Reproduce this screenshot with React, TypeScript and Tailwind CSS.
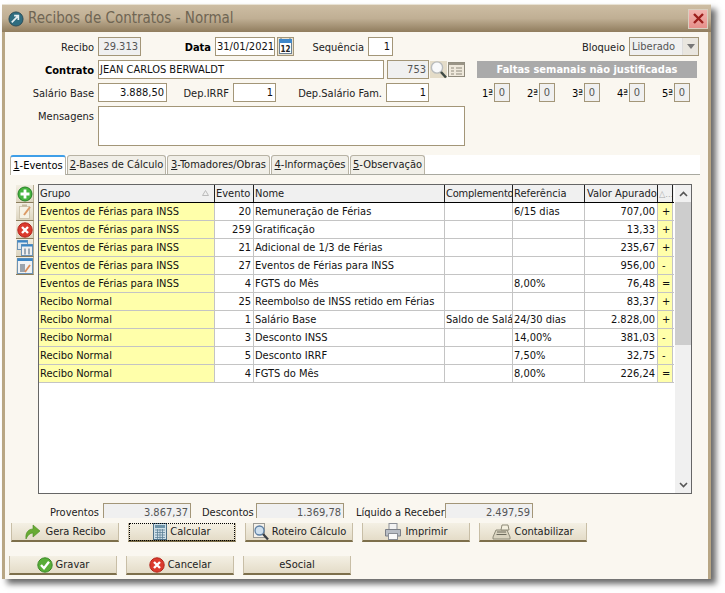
import React from "react";

const rows: string[][] = [
  ["Eventos de Férias para INSS","20","Remuneração de Férias","","6/15 dias","707,00","+"],
  ["Eventos de Férias para INSS","259","Gratificação","","","13,33","+"],
  ["Eventos de Férias para INSS","21","Adicional de 1/3 de Férias","","","235,67","+"],
  ["Eventos de Férias para INSS","27","Eventos de Férias para INSS","","","956,00","-"],
  ["Eventos de Férias para INSS","4","FGTS do Mês","","8,00%","76,48","="],
  ["Recibo Normal","25","Reembolso de INSS retido em Férias","","","83,37","+"],
  ["Recibo Normal","1","Salário Base","Saldo de Salário","24/30 dias","2.828,00","+"],
  ["Recibo Normal","3","Desconto INSS","","14,00%","381,03","-"],
  ["Recibo Normal","5","Desconto IRRF","","7,50%","32,75","-"],
  ["Recibo Normal","4","FGTS do Mês","","8,00%","226,24","="],
];

const colW = ["w-[176px]","w-[39px]","w-[191px]","w-[68px]","w-[72px]","w-[73px]","w-[15px]"];

function Field({ w, children, gray, right, className = "" }: { w: string; children?: React.ReactNode; gray?: boolean; right?: boolean; className?: string }) {
  return (
    <div className={`${w} h-[19px] shrink-0 border border-[#a39678] ${gray ? "bg-[#f0f0f0] text-[#555]" : "bg-white text-[#111]"} ${right ? "text-right pr-[2px]" : "pl-[1px]"} leading-[15px] pt-[1px] overflow-hidden ${className}`}>
      {children}
    </div>
  );
}

function Lbl({ w, bold, children }: { w: string; bold?: boolean; children: React.ReactNode }) {
  return <div className={`${w} shrink-0 text-right pr-[4px] pt-[3px] whitespace-nowrap text-[#222] ${bold ? "font-bold text-black" : ""}`}>{children}</div>;
}

function Box({ children }: { children: React.ReactNode }) {
  return <div className="w-[18px] h-[18px] flex items-center justify-center bg-gradient-to-b from-[#f2eee2] to-[#ddd5c0] border-b border-b-[#8a7c5c] border-r border-r-[#b8ad92]">{children}</div>;
}
function Plus() {
  return <Box><svg width="16" height="16" viewBox="0 0 16 16"><circle cx="8" cy="8" r="7" fill="#45b43f" stroke="#257f25"/><path d="M8 3.500v9M3.500 8h9" stroke="#fff" strokeWidth="2.800"/></svg></Box>;
}
function EditDoc() {
  return <Box><svg width="16" height="16" viewBox="0 0 16 16"><rect x="2.500" y="2.500" width="10" height="12" fill="#f6f2e6" stroke="#cfc6b0"/><path d="M5 1.500h5" stroke="#c4b99f" strokeWidth="2"/><path d="M7 11l6-8" stroke="#dc9a66" strokeWidth="2"/></svg></Box>;
}
function XCircle({ size = 16 }: { size?: number }) {
  return <svg width={size} height={size} viewBox="0 0 16 16"><circle cx="8" cy="8" r="7.200" fill="#db3b2e" stroke="#b3251c"/><path d="M5 5l6 6M11 5l-6 6" stroke="#fff" strokeWidth="2.400"/></svg>;
}
function WinDup() {
  return <Box><svg width="16" height="16" viewBox="0 0 16 16"><rect x="0.500" y="0.500" width="10" height="9" fill="#dfe7ee" stroke="#6d93b5"/><rect x="0.500" y="0.500" width="10" height="2" fill="#3b86c6"/><rect x="4.500" y="4.500" width="11" height="11" fill="#f0f0f0" stroke="#6d93b5"/><rect x="4.500" y="4.500" width="11" height="2" fill="#3b86c6"/><path d="M8 8.500v6M12 8.500v6" stroke="#9aa8b5" strokeWidth="2"/></svg></Box>;
}
function WinEdit() {
  return <Box><svg width="16" height="16" viewBox="0 0 16 16"><rect x="0.500" y="0.500" width="15" height="15" fill="#f0f2f4" stroke="#6d93b5"/><rect x="0.500" y="0.500" width="15" height="2.500" fill="#3b86c6"/><rect x="3" y="6" width="5" height="8" fill="#9aa3ad"/><path d="M8 14l5-7" stroke="#d98d5a" strokeWidth="1.800"/></svg></Box>;
}
function Calendar() {
  return <svg width="17" height="19" viewBox="0 0 17 19"><rect x="0.500" y="0.500" width="16" height="18" fill="#e9e2d0" stroke="#a39678"/><rect x="2.500" y="2.500" width="12" height="14" fill="#fff" stroke="#6a7f93"/><rect x="2" y="2" width="13" height="4" fill="#3f87c9"/><path d="M4 2v-1M13 2v-1" stroke="#6a7f93"/><text x="8.500" y="15" textAnchor="middle" fontSize="8" fontWeight="700" fontFamily="'DejaVu Sans',sans-serif" fill="#222">12</text></svg>;
}
function Magnifier() {
  return <svg width="17" height="19" viewBox="0 0 17 19"><rect x="0" y="1" width="17" height="17" fill="#e4dcc8"/><circle cx="7" cy="7.500" r="5.600" fill="#f8f9fa" stroke="#b9bcbd" strokeWidth="1.400"/><path d="M11 12l5 5.500" stroke="#3f4a44" strokeWidth="2.600"/></svg>;
}
function Card() {
  return <svg width="17" height="19" viewBox="0 0 17 19"><rect x="0.500" y="2.500" width="16" height="14" fill="#efe9dc" stroke="#8f8a7c"/><rect x="0.500" y="2.500" width="16" height="2.500" fill="#9a9587"/><path d="M3 8h3M3 11h3M3 14h3M8 8h6M8 11h6M8 14h6" stroke="#8f8a7c"/></svg>;
}
function Arrow() {
  return <svg width="18" height="18" viewBox="0 0 18 18"><path d="M2 16C1 9 5 6 9 6V2l7 6-7 6v-4c-3 0-5 2-7 6z" fill="#68ab33" stroke="#4c8a25" strokeWidth="0.600"/></svg>;
}
function Abacus() {
  return <svg width="14" height="17" viewBox="0 0 14 17"><rect x="0.500" y="0.500" width="13" height="16" fill="#cfe0e8" stroke="#4e7188"/><rect x="2" y="2" width="10" height="3" fill="#6d93a8"/><path d="M2 7h10M2 9.500h10M2 12h10M2 14.500h10M4.500 6v10M7 6v10M9.500 6v10" stroke="#5f8398" strokeWidth="0.800"/></svg>;
}
function Roteiro() {
  return <svg width="17" height="18" viewBox="0 0 17 18"><rect x="1.500" y="0.500" width="11" height="14" fill="#f4f1ea" stroke="#9b9a94"/><circle cx="7.500" cy="7.500" r="4.500" fill="#cfe0ee" stroke="#5c7fa3" strokeWidth="1.300"/><path d="M11 11l5 5.500" stroke="#3a3f45" strokeWidth="2.300"/></svg>;
}
function Printer() {
  return <svg width="18" height="17" viewBox="0 0 18 17"><rect x="5" y="0.500" width="8" height="6" fill="#f2f2f2" stroke="#8b8f96"/><path d="M1.500 6.500h15v6.500h-15z" fill="#b8bdc5" stroke="#7b7f87"/><rect x="4.500" y="10.500" width="9" height="6" fill="#fafafa" stroke="#8b8f96"/></svg>;
}
function Register() {
  return <svg width="19" height="17" viewBox="0 0 19 17"><path d="M1 14l3-7h11l3 7v2H1z" fill="#d9d3bf" stroke="#8d8a78"/><path d="M9 7l1-5h6l1 5z" fill="#f4f0df" stroke="#8d8a78"/><path d="M5 9h9M4.500 11.500h10" stroke="#6c6a5c"/></svg>;
}
function Check() {
  return <svg width="16" height="16" viewBox="0 0 16 16"><circle cx="8" cy="8" r="7.200" fill="#58ad38" stroke="#3b8a28"/><path d="M4 8l3 3.200L12 4.800" fill="none" stroke="#fff" strokeWidth="2.400"/></svg>;
}

function Btn({ w, icon, children, focus }: { w: string; icon?: React.ReactNode; children: React.ReactNode; focus?: boolean }) {
  return (
    <div className={`${w} h-[19px] shrink-0 relative flex items-center justify-center gap-[3px] bg-gradient-to-b from-[#f4f0e4] to-[#e4dcc8] border-b-2 border-b-[#7d6f4b] border-x border-x-[#c8bea6] text-[#222] whitespace-nowrap`}>
      {icon}
      <span>{children}</span>
      {focus && <span className="absolute inset-0 -bottom-[1px] border border-dotted border-black" />}
    </div>
  );
}

function SmallLbl({ w, children }: { w: string; children: React.ReactNode }) {
  return <div className={`${w} shrink-0 text-[#222] whitespace-nowrap`}>{children}</div>;
}

export default function App() {
  return (
    <div className="w-[725px] h-[593px] bg-white pt-[4px] pl-[2px] overflow-hidden font-['DejaVu_Sans'] font-stretch-condensed text-[11px] leading-[15px]">
      <div className="w-[709px] h-[575px] flex flex-col shadow-[5px_5px_6px_#6b6b6b] border-t border-t-[#e8e2d4]">
        <div className="h-[27px] shrink-0 flex items-center pl-[6px] pr-[3px] bg-gradient-to-b from-[#cdbda3] via-[#c0af94] to-[#907d5e]">
          <svg width="16" height="16" viewBox="0 0 17 17" className="mr-[4px]"><circle cx="8.500" cy="8.500" r="7.500" fill="#2f6d80" stroke="#294a55"/><path d="M4 12l6-6M6.500 5H11v4.500" fill="none" stroke="#e6eef0" strokeWidth="1.800"/></svg>
          <span className="text-[15px] text-[#6f6553] flex-1">Recibos de Contratos - Normal</span>
          <div className="w-[20px] h-[20px] flex items-center justify-center bg-gradient-to-b from-[#f2b5b0] to-[#e58f8a] border border-[#d8cfc0]">
            <svg width="11" height="11" viewBox="0 0 11 11"><path d="M1 1l9 9M10 1l-9 9" stroke="#9c1f1c" strokeWidth="2.400"/></svg>
          </div>
        </div>
        <div className="flex-1 flex flex-col bg-[#faf7f0] border-x-[3px] border-x-[#b8a684] pt-[5px] relative">
          <div className="flex items-start h-[19px]">
            <Lbl w="w-[93px]">Recibo</Lbl>
            <Field w="w-[43px]" gray right>29.313</Field>
            <Lbl w="w-[74px]" bold>Data</Lbl>
            <Field w="w-[60px]">31/01/2021</Field>
            <div className="w-[17px] ml-[2px] shrink-0"><Calendar /></div>
            <Lbl w="w-[74px]">Sequência</Lbl>
            <Field w="w-[25px]" right>1</Field>
            <Lbl w="w-[236px]">Bloqueio</Lbl>
            <div className="w-[70px] h-[19px] shrink-0 border border-[#a39678] bg-[#f0f0f0] text-[#555] pl-[2px] pt-[1px] flex justify-between">
              <span>Liberado</span>
              <div className="w-[16px] h-[17px] -mt-[1px] flex items-center justify-center bg-[#e9e6df] border-l border-l-[#ddd]">
                <svg width="8" height="5" viewBox="0 0 8 5"><path d="M0 0h8L4 5z" fill="#777" /></svg>
              </div>
            </div>
          </div>
          <div className="flex items-start h-[19px] mt-[4px]">
            <Lbl w="w-[93px]" bold>Contrato</Lbl>
            <Field w="w-[286px]" className="text-[#111]">JEAN CARLOS BERWALDT</Field>
            <Field w="w-[42px] ml-[3px]" gray right>753</Field>
            <div className="w-[17px] ml-[1px] shrink-0"><Magnifier /></div>
            <div className="w-[17px] ml-[1px] shrink-0"><Card /></div>
            <div className="w-[220px] h-[17px] ml-[12px] mt-[1px] shrink-0 bg-[#aaaaaa] text-white font-bold text-center text-[11px] leading-[17px]">Faltas semanais não justificadas</div>
          </div>
          <div className="flex items-start h-[19px] mt-[4px]">
            <Lbl w="w-[93px]">Salário Base</Lbl>
            <Field w="w-[69px]" right>3.888,50</Field>
            <Lbl w="w-[66px]">Dep.IRRF</Lbl>
            <Field w="w-[43px]" right>1</Field>
            <Lbl w="w-[110px]">Dep.Salário Fam.</Lbl>
            <Field w="w-[43px]" right>1</Field>
            <div className="w-[65px] shrink-0 text-right pr-[1px] pt-[3px]">1ª</div>
            <Field w="w-[16px]" gray className="text-center !pl-0 !pr-0">0</Field>
            <div className="w-[29px] shrink-0 text-right pr-[1px] pt-[3px]">2ª</div>
            <Field w="w-[16px]" gray className="text-center !pl-0 !pr-0">0</Field>
            <div className="w-[29px] shrink-0 text-right pr-[1px] pt-[3px]">3ª</div>
            <Field w="w-[16px]" gray className="text-center !pl-0 !pr-0">0</Field>
            <div className="w-[29px] shrink-0 text-right pr-[1px] pt-[3px]">4ª</div>
            <Field w="w-[16px]" gray className="text-center !pl-0 !pr-0">0</Field>
            <div className="w-[29px] shrink-0 text-right pr-[1px] pt-[3px]">5ª</div>
            <Field w="w-[16px]" gray className="text-center !pl-0 !pr-0">0</Field>
          </div>
          <div className="flex items-start h-[40px] mt-[4px]">
            <Lbl w="w-[93px]">Mensagens</Lbl>
            <div className="w-[367px] h-[40px] border border-[#a39678] bg-white" />
          </div>
          <div className="ml-[5px] w-[690px] h-[20px] mt-[9px] bg-white border-b border-b-[#a9a9a0] flex items-end gap-[1px] shrink-0">
            <div className="w-[56px] h-[20px] bg-white border-x border-x-[#b8b3a4] border-t-2 border-t-[#3f9fe8] rounded-t-[3px] text-center -mb-[1px] z-10 pt-[1px]"><u>1</u>-Eventos</div>
            {[["w-[99px]","2","-Bases de Cálculo"],["w-[103px]","3","-Tomadores/Obras"],["w-[78px]","4","-Informações"],["w-[75px]","5","-Observação"]].map(t => (
              <div key={t[1]} className={`${t[0]} h-[19px] bg-[#f1efe8] border-x border-t border-[#b8b3a4] rounded-t-[3px] text-center text-[#222] whitespace-nowrap pt-[1px]`}><u>{t[1]}</u>{t[2]}</div>
            ))}
          </div>
          <div className="flex ml-[11px] mt-[9px] shrink-0">
            <div className="w-[18px] flex flex-col mt-[1px] shrink-0">
              <Plus /><EditDoc /><Box><XCircle /></Box><WinDup /><WinEdit />
            </div>
            <div className="ml-[4px] w-[654px] h-[310px] border border-[#666] bg-white flex shrink-0">
              <div className="w-[635px] shrink-0 flex flex-col min-w-0">
                <div className="flex h-[18px] shrink-0 bg-[#f0f0f0] border-b border-b-black">
                  {["Grupo","Evento","Nome","Complemento","Referência","Valor Apurado",""].map((h, i) => (
                    <div key={i} className={`${colW[i]} shrink-0 ${i === 5 ? "pl-[2px]" : "pl-[1px]"} ${i === 3 ? "tracking-[-0.2px]" : ""} border-r border-r-[#222] overflow-hidden whitespace-nowrap relative text-[#222] leading-[18px]`}>
                      {h}
                      {i === 0 && <svg className="absolute right-[5px] top-[5px]" width="7" height="6" viewBox="0 0 7 6"><path d="M3.500 0.500L6.500 5.500H0.500z" fill="none" stroke="#bbb" /></svg>}
                      {i === 6 && <span className="text-[#aaa] text-[9px] leading-[14px]">△…</span>}
                    </div>
                  ))}
                </div>
                {rows.map((r, ri) => (
                  <div key={ri} className="flex h-[18px] shrink-0 border-b border-b-[#c4c4c4]">
                    {r.map((c, i) => (
                      <div key={i} className={`${colW[i]} shrink-0 border-r border-r-[#c4c4c4] overflow-hidden whitespace-nowrap leading-[18px] text-[#111] ${i === 0 || i === 6 ? "bg-[#ffffaa]" : ""} ${i === 1 || i === 5 ? "text-right pr-[2px]" : i === 6 ? "pl-[4px]" : "pl-[1px]"}`}>{c}</div>
                    ))}
                  </div>
                ))}
              </div>
              <div className="w-[16px] ml-[1px] shrink-0 bg-[#f0f0f0] flex flex-col">
                <div className="h-[17px] flex items-center justify-center"><svg width="9" height="6" viewBox="0 0 9 6"><path d="M1 5l3.500-3.500L8 5" fill="none" stroke="#555" strokeWidth="1.600" /></svg></div>
                <div className="h-[143px] bg-[#cdcdcd]" />
                <div className="flex-1" />
                <div className="h-[17px] flex items-center justify-center"><svg width="9" height="6" viewBox="0 0 9 6"><path d="M1 1l3.500 3.500L8 1" fill="none" stroke="#555" strokeWidth="1.600" /></svg></div>
              </div>
            </div>
          </div>
          <div className="flex items-start h-[15px] mt-[9px] overflow-hidden text-[#222] shrink-0">
            <div className="w-[45px] shrink-0" />
            <SmallLbl w="w-[53px]"><span className="block mt-[2px]">Proventos</span></SmallLbl>
            <Field w="w-[88px] border-b-0" gray right>3.867,37</Field>
            <div className="w-[11px] shrink-0" />
            <SmallLbl w="w-[54px]"><span className="block mt-[2px]">Descontos</span></SmallLbl>
            <Field w="w-[88px] border-b-0" gray right>1.369,78</Field>
            <div className="w-[12px] shrink-0" />
            <SmallLbl w="w-[89px]"><span className="block mt-[2px]">Líquido a Receber</span></SmallLbl>
            <Field w="w-[88px] border-b-0" gray right>2.497,59</Field>
          </div>
          <div className="flex ml-[6px] mt-[5px] gap-[9px] shrink-0">
            <Btn w="w-[108px]" icon={<Arrow />}>Gera Recibo</Btn>
            <Btn w="w-[108px]" icon={<Abacus />} focus>Calcular</Btn>
            <Btn w="w-[108px]" icon={<Roteiro />}>Roteiro Cálculo</Btn>
            <Btn w="w-[108px]" icon={<Printer />}>Imprimir</Btn>
            <Btn w="w-[108px]" icon={<Register />}>Contabilizar</Btn>
          </div>
          <div className="flex ml-[4px] mt-[14px] gap-[9px] shrink-0">
            <Btn w="w-[108px]" icon={<Check />}>Gravar</Btn>
            <Btn w="w-[108px]" icon={<XCircle />}>Cancelar</Btn>
            <Btn w="w-[108px]">eSocial</Btn>
          </div>
        </div>
      </div>
    </div>
  );
}
